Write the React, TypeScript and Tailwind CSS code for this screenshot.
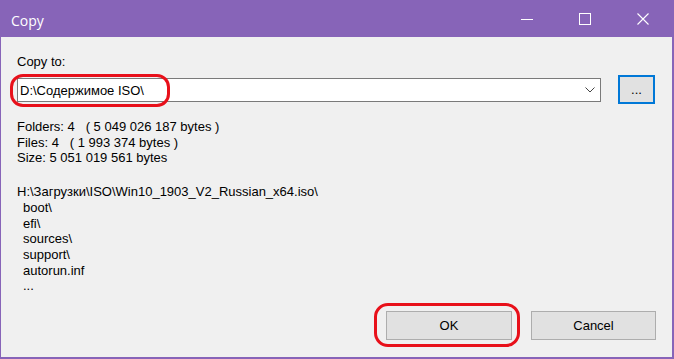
export default function App() {
  const font = "font-['Liberation_Sans',Arial,sans-serif]";

  return (
    <div className="w-[674px] h-[359px] flex flex-col bg-[#8764b8] overflow-hidden">
      {/* title bar */}
      <div className="h-[37px] flex shrink-0 text-white">
        <span className="pl-[11px] pt-[11px] leading-[20px] text-[14px] font-['Open_Sans',sans-serif]">
          Copy
        </span>
        <div className="ml-auto mr-[2px] flex h-full">
          <div className="w-[58px] h-full flex items-center justify-center">
            <svg width="12" height="12" viewBox="0 0 12 12">
              <line x1="0" y1="6.5" x2="12" y2="6.5" stroke="white" strokeWidth="1" />
            </svg>
          </div>
          <div className="w-[58px] h-full flex items-center justify-center">
            <svg width="12" height="12" viewBox="0 0 12 12">
              <rect x="0.5" y="0.5" width="11" height="11" fill="none" stroke="white" strokeWidth="1" />
            </svg>
          </div>
          <div className="w-[58px] h-full flex items-center justify-center">
            <svg width="12" height="12" viewBox="0 0 12 12">
              <path d="M0.5 0.5 L11.5 11.5 M11.5 0.5 L0.5 11.5" stroke="white" strokeWidth="1.1" />
            </svg>
          </div>
        </div>
      </div>

      {/* body */}
      <div
        className={`flex-1 flex flex-col bg-[#f0f0f0] ml-[1px] mr-[2px] mb-[2px] pl-[16px] pr-[16px] pt-[17px] pb-[17px] text-[13px] text-black ${font}`}
      >
        <div className="leading-[16px]">Copy to:</div>

        <div className="flex items-start gap-[17px] mt-[5px]">
          <div className="relative mt-[3px] w-[584px] h-[24px] border border-[#7a7a7a] bg-white flex items-center">
            <span className="flex-1 pl-[2px] leading-[15px]">D:\Содержимое ISO\</span>
            <svg width="10" height="6" viewBox="0 0 10 6" className="mr-[5px]">
              <polyline points="0.5,0.5 5,5 9.5,0.5" fill="none" stroke="#444" strokeWidth="1" />
            </svg>
            <div className="absolute left-[-8px] top-[-5px] w-[160px] h-[33px] rounded-[13px] border-[3px] border-[#e8101a]" />
          </div>
          <button className="w-[37px] h-[29px] border-2 border-[#0078d7] bg-[#e1e1e1] flex items-center justify-center leading-[15px]">
            ...
          </button>
        </div>

        <div className="mt-[15px] leading-[15.7px] whitespace-pre">
          <div>Folders: 4   ( 5 049 026 187 bytes )</div>
          <div>Files: 4   ( 1 993 374 bytes )</div>
          <div>Size: 5 051 019 561 bytes</div>
        </div>

        <div className="mt-[18px] leading-[15.7px]">
          <div>H:\Загрузки\ISO\Win10_1903_V2_Russian_x64.iso\</div>
          <div className="pl-[6px]">
            <div>boot\</div>
            <div>efi\</div>
            <div>sources\</div>
            <div>support\</div>
            <div>autorun.inf</div>
            <div>...</div>
          </div>
        </div>

        <div className="mt-auto flex justify-end gap-[19px]">
          <div className="relative">
            <button className="w-[126px] h-[29px] border border-[#adadad] bg-[#e1e1e1] flex items-center justify-center">
              OK
            </button>
            <div className="absolute left-[-12px] top-[-8px] w-[146px] h-[44px] rounded-[14px] border-[3px] border-[#e8101a]" />
          </div>
          <button className="w-[125px] h-[29px] border border-[#adadad] bg-[#e1e1e1] flex items-center justify-center">
            Cancel
          </button>
        </div>
      </div>
    </div>
  );
}
